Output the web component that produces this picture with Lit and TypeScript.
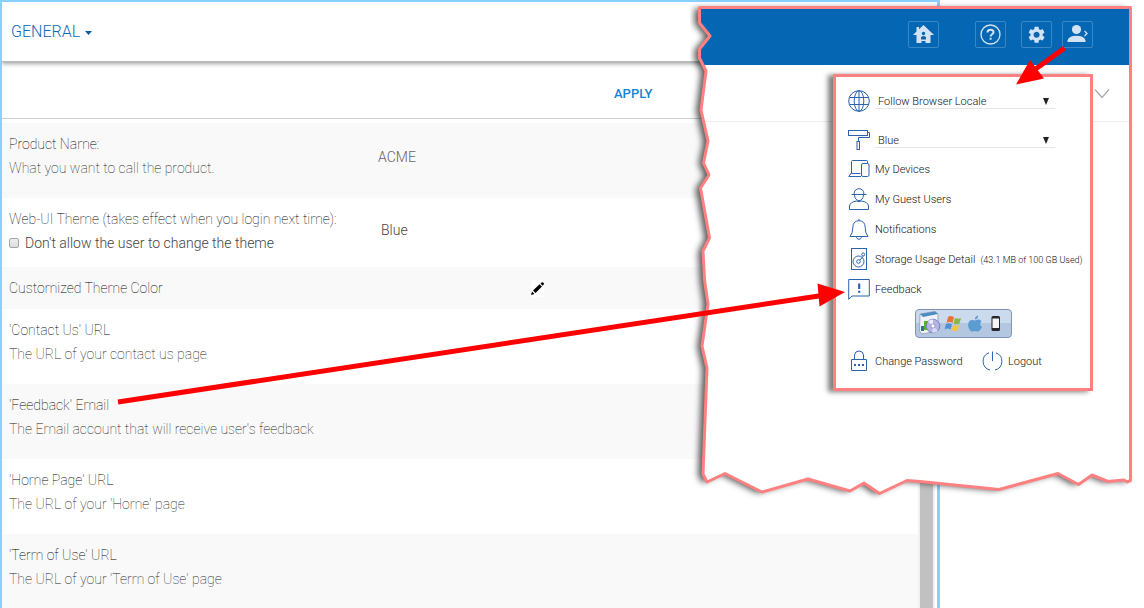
import { LitElement, html, css, svg, nothing } from "lit";
import { customElement, property } from "lit/decorators.js";

type Setting = {
  id: string;
  title: string;
  note?: string;
  kind: "text" | "theme" | "color";
  value?: string;
};

const settings: Setting[] = [
  { id: "product", title: "Product Name:", note: "What you want to call the product.", kind: "text", value: "ACME" },
  { id: "theme", title: "Web-UI Theme (takes effect when you login next time):", kind: "theme" },
  { id: "color", title: "Customized Theme Color", kind: "color" },
  { id: "contact", title: "'Contact Us' URL", note: "The URL of your contact us page", kind: "text" },
  { id: "feedback", title: "'Feedback' Email", note: "The Email account that will receive user's feedback", kind: "text" },
  { id: "home", title: "'Home Page' URL", note: "The URL of your 'Home' page", kind: "text" },
  { id: "terms", title: "'Term of Use' URL", note: "The URL of your 'Term of Use' page", kind: "text" },
];

const glyphs = {
  globe: svg`<circle cx="11" cy="11" r="10.3"/><ellipse cx="11" cy="11" rx="4.8" ry="10.3"/><path d="M11 .7V21.3M2 7.5H20M2 14.5H20"/>`,
  roller: svg`<rect x=".5" y="1.5" width="19" height="5"/><path d="M19.5 3.5h2v5H10.5v4"/><rect x="9" y="12.500" width="2.500" height="8"/>`,
  devices: svg`<path d="M3.500 15.500V3.500Q3.500 2.500 4.500 2.500H18.500Q19.500 2.500 19.500 3.500V5M3.500 14.500L.8 18.500H12.500M3.500 15.500H12.500M1 18.500H13"/><rect x="13.500" y="5.500" width="7.500" height="13" rx="1.500"/>`,
  guest: svg`<path d="M3.500 6.500H18.500M6 6.300C6 -1.200 16 -1.200 16 6.300M6.500 7C7 14.500 15 14.500 15.500 7M1.500 21.500V18Q2 14 8.500 13Q11 14.500 13.500 13Q20 14 20.500 18V21.500Z"/>`,
  bell: svg`<path d="M11 .8V2.500M2 18.500Q4.800 15.500 4.800 9.500Q5 2.700 11 2.700T17.200 9.500Q17.200 15.500 20 18.500ZM8.500 19.200Q9 21.300 11 21.300T13.500 19.200"/>`,
  storage: svg`<rect x="3.500" y=".5" width="15" height="21"/><circle cx="10.500" cy="13.500" r="5.500"/><circle cx="10.500" cy="13.500" r="1.800"/><path d="M12 12L15 8.500"/><circle cx="15.200" cy="6.500" r="1.500"/>`,
  feedback: svg`<path d="M.7 1.500H21.300V18H4L.7 21.300Z"/><path stroke-width="2.200" d="M11.200 5.500V11M11.200 12.800V14.800"/>`,
  lock: svg`<path d="M3.500 9.500H18.500V20.500H3.500ZM6.500 9.500V5Q7 1 11 1T15.500 5V9.500"/><path stroke-width="2" d="M6 15H8M10 15H12M14 15H16"/>`,
  power: svg`<path d="M8 2.800A9 9 0 0 0 9 20M15 2.800A9 9 0 0 1 14 20M11.500 1.500V11"/>`,
};

@customElement("line-icon")
export class LineIcon extends LitElement {
  @property() name: keyof typeof glyphs = "globe";
  static styles = css`
    :host { display: block; flex: none; width: 22px; height: 22px; }
    .icon { display: block; width: 22px; height: 22px; fill: none; stroke: #2a63ae; }
  `;
  render() {
    return html`<svg class="icon" viewBox="0 0 22 22" aria-hidden="true">${glyphs[this.name]}</svg>`;
  }
}

@customElement("settings-window")
export class SettingsWindow extends LitElement {
  static styles = css`
    :host {
      display: flex; flex-direction: column; box-sizing: border-box; height: 100%;
      border: solid #8ad0ff; border-width: 2px 3px 0 2px; background: #fff; overflow: hidden;
      font: 100 14px/24px Roboto, sans-serif; color: #000;
    }
    .head { display: flex; flex: none; align-items: center; height: 59px; padding-left: 9px;
      border-bottom: 1px solid #b8b8b8; box-shadow: 0 2px 4px rgba(0, 0, 0, .35); }
    button { font: inherit; color: inherit; background: none; border: 0; padding: 0; }
    .section { display: flex; align-items: center; gap: 5px; font-size: 16px; font-weight: 300; color: #0f68b4; }
    .caret { width: 7px; height: 4px; fill: #0f5ba0; margin-top: 2px; }
    .tools { display: grid; grid-template-columns: 612px 1fr; flex: none; align-items: center; box-sizing: border-box;
      height: 57px; padding-top: 8px; border-bottom: 1px solid #ccc; margin-bottom: 4px; }
    .apply { grid-column: 2; justify-self: start; font-size: 13px; font-weight: 500; color: #1583d4; }
    .body { display: flex; flex: 1; min-height: 0; }
    .list { flex: 1; min-width: 0; overflow: hidden; }
    .row { display: grid; grid-template-columns: 367px 1fr; align-items: center; padding: 9px 0 18px 7px; }
    .row.theme { padding-bottom: 12px; }
    .row.color { padding-bottom: 9px; }
    .row:nth-child(odd) { background: #f9f9f9; }
    .label { display: block; }
    .note { color: #222; }
    .check { display: flex; align-items: center; gap: 6px; font-weight: 300; color: #444; }
    .box { appearance: none; width: 10px; height: 10px; margin: 0; border: 1px solid #a5a5a5; border-radius: 2px;
      background: linear-gradient(#eee, #ddd); flex: none; }
    .field, .pick { box-sizing: border-box; width: 260px; font: inherit; font-weight: 300; color: #444; border: 0; background: none; outline: none; }
    .field { padding: 2px 0 0 2px; color: #666; }
    .pick { appearance: none; padding: 0 0 3px 5px; }
    .edit { display: flex; align-items: center; justify-content: center; width: 13px; height: 17px; background: #fff; margin-left: 155px; }
    .pencil { width: 13px; height: 13px; }
    .track { flex: none; box-sizing: border-box; width: 17px; padding: 0 2px; margin-right: 2px; background: #f1f1f1; }
    .thumb { height: 100%; background: #c1c1c1; }
  `;

  private control(s: Setting) {
    if (s.kind === "theme") return html`<select class="pick" id=${s.id}><option>Blue</option></select>`;
    if (s.kind === "color")
      return html`<button class="edit" id=${s.id} aria-label="Edit theme color">
        <svg class="pencil" viewBox="0 0 13 13"><path d="M0 13L1 9.500L3.500 12ZM2 8.500L8.500 2.200L11 4.500L4.500 11ZM9.500 1.500L10.500.5Q11.500-.3 12.500.7T12.500 2.800L11.700 3.700Z"/></svg>
      </button>`;
    return html`<input class="field" id=${s.id} type="text" .value=${s.value ?? ""} />`;
  }

  render() {
    return html`
      <header class="head">
        <button class="section">GENERAL <svg class="caret" viewBox="0 0 7 4"><path d="M0 0H7L3.500 4Z"/></svg></button>
      </header>
      <div class="tools"><button class="apply">APPLY</button></div>
      <div class="body">
        <div class="list">
          ${settings.map((s) => html`
            <div class="row ${s.kind}">
              <div>
                <label class="label" for=${s.id}>${s.title}</label>
                ${s.note ? html`<div class="note">${s.note}</div>` : nothing}
                ${s.kind === "theme"
                  ? html`<label class="check"><input class="box" type="checkbox" />Don't allow the user to change the theme</label>`
                  : nothing}
              </div>
              ${this.control(s)}
            </div>`)}
        </div>
        <div class="track"><div class="thumb"></div></div>
      </div>`;
  }
}

@customElement("user-menu")
export class UserMenu extends LitElement {
  static styles = css`
    :host {
      display: flex; flex-direction: column; box-sizing: border-box; width: 260px; padding: 9px 0 12px 12px;
      background: #fff; border: 3px solid #ff8080; box-shadow: -5px 1px 5px rgba(0, 0, 0, .5);
      font: 300 11px/16px Roboto, sans-serif; color: #111;
    }
    .pair, .item { display: flex; align-items: center; gap: 5px; height: 30px; }
    .pair { height: 29px; }
    .pair.first { margin-bottom: 10px; }
    button { font: inherit; color: inherit; background: none; border: 0; padding: 0; text-align: left; white-space: nowrap; }
    .text { padding-top: 1px; }
    .drop { display: grid; width: 180px; align-items: center; }
    .pick { grid-area: 1 / 1; appearance: none; box-sizing: border-box; height: 17px; width: 100%; font: inherit; color: inherit;
      border: 0; border-bottom: 1px solid #e6e6e6; border-radius: 0; background: none; padding: 2px 0 0 3px; }
    .arrow { grid-area: 1 / 1; justify-self: end; width: 6px; height: 7px; margin: 2px 6px 0 0; fill: #222; pointer-events: none; }
    .small { font-size: 9px; }
    .apps { display: flex; align-items: center; align-self: flex-start; box-sizing: border-box; width: 97px; height: 29px;
      margin: 5px 0 8px 67px; padding: 0 3px; border: 1px solid #8093b4; border-radius: 4px;
      background: linear-gradient(#cbdaec 0 50%, #b3c7e0 50% 100%); }
    .art { display: block; width: 89px; height: 25px; }
    .foot { display: grid; grid-template-columns: 133px 1fr; }
  `;

  private item(icon: string, text: string, extra?: string) {
    return html`<button class="item"><line-icon name=${icon}></line-icon><span class="text">${text}</span>${extra
      ? html`<span class="text small">${extra}</span>` : nothing}</button>`;
  }

  private drop(icon: string, label: string, text: string, cls: string) {
    return html`<div class="pair ${cls}"><line-icon name=${icon}></line-icon>
      <div class="drop">
        <select class="pick" aria-label=${label}><option>${text}</option></select>
        <svg class="arrow" viewBox="0 0 6 7"><path d="M0 0H6L3 7Z"/></svg>
      </div></div>`;
  }

  render() {
    return html`
      ${this.drop("globe", "Language", "Follow Browser Locale", "first")}
      ${this.drop("roller", "Theme", "Blue", "")}
      ${this.item("devices", "My Devices")}
      ${this.item("guest", "My Guest Users")}
      ${this.item("bell", "Notifications")}
      ${this.item("storage", "Storage Usage Detail", "(43.1 MB of 100 GB Used)")}
      ${this.item("feedback", "Feedback")}
      <button class="apps" aria-label="Download clients">
        <svg class="art" viewBox="919 311 89 25">
          <path d="M920 314L935 311.500L938 314V331L922 334L919.500 331Z" fill="#eef3f8" stroke="#8497aa" stroke-width=".7"/>
          <path d="M920 314L935 311.500L938 314L923 317Z" fill="#4a8cc4"/>
          <path d="M924 321H928V330H924Z" fill="#56b52f"/><path d="M921 326H924V331H921Z" fill="#3469ae"/>
          <circle cx="933" cy="326" r="6.800" fill="#b4b3e4" stroke="#6467a8" stroke-width=".7"/>
          <path d="M933 326L928 321.500A6.500 6.500 0 0 1 933 319.500Z" fill="#e9eaff"/>
          <path d="M933 326L938 331A6.500 6.500 0 0 1 932 332.500Z" fill="#d7d9fa"/>
          <circle cx="933" cy="326" r="2" fill="#fff" stroke="#7778ad" stroke-width=".6"/>
          <path d="M948 317Q951 315 954 317.500L952.500 323Q949.500 321 946.500 323Z" fill="#e8733a"/>
          <path d="M955 318Q958 319.500 961 318L959.500 323.500Q956 325 953.500 323.500Z" fill="#86b942"/>
          <path d="M946 324Q949 322.500 952 324.500L950.500 329.500Q947.500 327.500 944.500 329.500Z" fill="#4c91d3"/>
          <path d="M953 325Q956 326.500 959 325L957.500 330.500Q954.500 332 951.500 330Z" fill="#f4c542"/>
          <path d="M975 319.500Q974.500 316.500 978 315.500Q978.500 318.500 975 319.500ZM975 320.500Q980 318 981.500 321.500Q978.500 324 982 327Q979.500 332 977 331.500Q975 330.500 973 331.500Q969.500 332 968 325.500Q968.500 318.500 975 320.500Z" fill="#5a9dd2"/>
          <rect x="991.500" y="316" width="8.500" height="15" rx="1.500" fill="#27272b"/><rect x="992.500" y="318.500" width="6.500" height="9.500" fill="#f4f5f7"/>
        </svg>
      </button>
      <div class="foot">${this.item("lock", "Change Password")}${this.item("power", "Logout")}</div>`;
  }
}

const torn =
  "M1130.500 7.500H699.500V23L710 36L699.500 49V58L706 71L701 110L708 141L703.500 163L709 175L700.500 188L709.500 238L703 251L704.500 280L708 304L702 346L707 368L703 474L707 482L725 473.500L762 492L808 479L850 491L864 483L879.500 493.500L907 480.500L920 481.500L999 489.500L1058 473.500L1078.500 484.500L1092 475L1108 481.500L1124 480L1127 482L1130.500 480.500Z";

@customElement("torn-panel")
export class TornPanel extends LitElement {
  static styles = css`
    :host { display: grid; width: 454px; height: 510px; }
    .sheet { grid-area: 1 / 1; width: 454px; height: 510px; }
    .paper { fill: #fff; filter: drop-shadow(-5px 1px 3px rgba(0, 0, 0, .65)); }
    .edge { fill: none; stroke: #ff8080; stroke-width: 3px; stroke-linejoin: round; }
    .content { grid-area: 1 / 1; display: flex; flex-direction: column; align-items: flex-end; z-index: 1; padding: 21px 51px 0 0; }
    .bar { display: flex; }
    .tool { box-sizing: border-box; width: 31px; height: 27px; padding: 0; display: flex; align-items: center; justify-content: center;
      background: none; border: 1px solid rgba(255, 255, 255, .22); border-radius: 2px; margin-left: 10px; }
    .tool.home { margin-right: 26px; }
    .tool.gear { margin-left: 15px; }
    .glyph { width: 25px; height: 23px; fill: #d3e3f3; }
    .menu { margin-top: 26px; }
  `;
  render() {
    return html`
      <svg class="sheet" viewBox="690 0 454 510" aria-hidden="true">
        <defs><clipPath id="cut"><path d=${torn}/></clipPath></defs>
        <path class="paper" d=${torn}/>
        <g clip-path="url(#cut)">
          <rect x="690" y="0" width="454" height="65" fill="#0566b3"/>
          <path d="M700 121.500H1131" stroke="#eee"/>
          <path d="M1095 89.500L1102 97.500L1109 89.500" fill="none" stroke="#aaa" stroke-width="1.200"/>
        </g>
        <path class="edge" d=${torn}/>
      </svg>
      <div class="content">
        <div class="bar">
          <button class="tool home" aria-label="Home"><svg class="glyph" viewBox="0 0 25 23"><path fill-rule="evenodd" d="M12.500 2L23 12H19.500V20H14.500V18H10.500V20H5.500V12H2L5.500 8.500V4H8V6.200ZM12.500 8.800A1.700 1.700 0 1 0 12.500 12.200A1.700 1.700 0 1 0 12.500 8.800ZM10 16.500V14.500Q10 13 12.500 13T15 14.500V16.500Z"/></svg></button>
          <button class="tool" aria-label="Help"><svg class="glyph" viewBox="0 0 25 23"><circle cx="12.500" cy="11.500" r="9.500" fill="none" stroke="#d3e3f3" stroke-width="1.300"/><path d="M9.500 9.500Q9.500 6.800 12.500 6.800T15.500 9.300C15.500 11.300 12.600 11.200 12.600 13.500M12.600 14.800V16.800" fill="none" stroke="#d3e3f3" stroke-width="2"/></svg></button>
          <button class="tool gear" aria-label="Settings"><svg class="glyph" viewBox="0 0 25 23"><path transform="translate(2.500 1.700) scale(.84)" d="M19.140 12.940c.04-.3.060-.61.060-.94 0-.32-.02-.64-.07-.94l2.030-1.580c.18-.14.230-.41.120-.61l-1.920-3.320c-.12-.22-.37-.29-.59-.22l-2.390.96c-.5-.38-1.030-.7-1.620-.94l-.36-2.540c-.04-.24-.24-.41-.48-.41h-3.840c-.24 0-.43.170-.47.410l-.36 2.540c-.59.240-1.130.57-1.620.94l-2.390-.96c-.22-.08-.47 0-.59.220L2.740 8.870c-.12.210-.08.470.12.610l2.030 1.580c-.05.3-.09.630-.09.940s.02.640.07.940l-2.030 1.580c-.18.140-.23.410-.12.610l1.920 3.320c.12.220.37.290.59.220l2.390-.96c.5.380 1.030.7 1.620.94l.36 2.540c.05.240.24.410.48.410h3.840c.24 0 .44-.17.470-.41l.36-2.540c.59-.24 1.130-.56 1.620-.94l2.390.96c.22.080.47 0 .59-.22l1.920-3.320c.12-.22.070-.47-.12-.61l-2.010-1.580zM12 15.600c-1.980 0-3.600-1.620-3.600-3.600s1.620-3.600 3.600-3.600 3.600 1.620 3.600 3.600-1.620 3.600-3.600 3.600z"/></svg></button>
          <button class="tool" aria-label="Account"><svg class="glyph" viewBox="0 0 25 23"><circle cx="11.500" cy="6.500" r="4.600"/><path d="M2.500 19V17.500Q3.500 12.700 11.500 12.700T20.500 17.500V19Z"/><path d="M19.500 8L22 10.500L19.500 13" fill="none" stroke="#d3e3f3" stroke-width="1.300"/></svg></button>
        </div>
        <user-menu class="menu"></user-menu>
      </div>`;
  }
}

@customElement("app-root")
export class AppRoot extends LitElement {
  static styles = css`
    :host { display: block; position: relative; height: 100vh; overflow: hidden; background: #fff; }
    .window { width: calc(100% - 204px); }
    .panel { position: absolute; top: 0; right: 0; }
    .arrows { position: absolute; z-index: 2; top: 0; left: 0; width: 100%; height: 608px; pointer-events: none; fill: #f00; stroke: #f00; }
  `;
  render() {
    return html`
      <settings-window class="window"></settings-window>
      <torn-panel class="panel"></torn-panel>
      <svg class="arrows" viewBox="0 0 1144 608" preserveAspectRatio="none" aria-hidden="true">
        <path d="M118 402L822 295.500M1064.500 48L1035 69.500" stroke-width="5"/>
        <path d="M817.500 283.500L845 292L819.500 306.500ZM1030 60L1016 84.500L1044 78.500Z" stroke="none"/>
      </svg>`;
  }
}
